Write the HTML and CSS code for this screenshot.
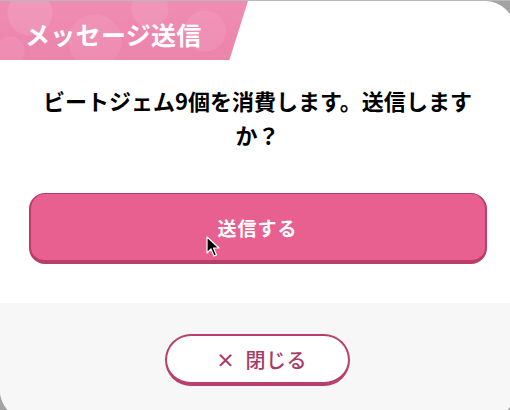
FILE: index.html
```html
<!DOCTYPE html>
<html lang="ja">
<head>
<meta charset="utf-8">
<title>メッセージ送信</title>
<link rel="stylesheet" href="styles.css">
</head>
<body>
<div class="dialog">
    <div class="head">
        <h1 class="title">メッセージ送信</h1>
    </div>
    <div class="main">
        <p class="msg">ビートジェム9個を消費します。送信しますか？</p>
        <button class="send">送信する</button>
    </div>
    <div class="foot">
        <button class="close"><span class="x">×</span>閉じる</button>
    </div>
</div>
<svg class="cursor" width="14" height="22" viewBox="0 0 14 22">
    <path d="M1 1 L1 17 L5 13 L8 20 L10.5 19 L7.5 12 L13 12 Z" fill="#000" stroke="#fff" stroke-width="1.2" stroke-linejoin="round"/>
</svg>
</body>
</html>
```
FILE: styles.css
```css
*{ margin:0; padding:0; box-sizing:border-box;}
html,body{ width:510px; height:410px; overflow:hidden;}
body{ background:#a3a3a3; border-top:1px solid #b8b8b8; font-family:"Noto Sans CJK JP","Noto Sans",sans-serif; position:relative;}
.dialog{ width:515px; height:419px; background:#fff; border-radius:0 30px 30px 30px; overflow:hidden; display:flex; flex-direction:column;}
.head{ height:59px;}
.title{ width:248px; height:59px; padding:6px 0 0 25px; display:flex; align-items:center; color:#fff; font-size:25px; font-weight:700; letter-spacing:0.3px;
    clip-path:polygon(0 0,100% 0,92.5% 100%,0 100%);
    background:
        radial-gradient(circle at 30px 12px,rgba(255,255,255,.1) 0 22px,transparent 23px),
        radial-gradient(circle at 95px 40px,rgba(255,255,255,.07) 0 26px,transparent 27px),
        radial-gradient(circle at 150px 8px,rgba(255,255,255,.09) 0 18px,transparent 19px),
        radial-gradient(circle at 205px 30px,rgba(255,255,255,.08) 0 20px,transparent 21px),
        radial-gradient(circle at 10px 50px,rgba(255,255,255,.07) 0 14px,transparent 15px),
        linear-gradient(#f08cb2,#ec84ab);}
.main{ height:243px; padding-top:23px; display:flex; flex-direction:column; align-items:center;}
.msg{ width:470px; font-size:22px; font-weight:700; line-height:34px; text-align:center; color:#000;}
.send{ margin-top:42px; width:458px; height:71px; border-radius:16px; background:#e8608f; border:1px solid #b83d69; border-bottom-width:4px; border-left-width:2px; border-right-width:2px;
    color:#fff; font-family:inherit; font-size:19px; font-weight:700; letter-spacing:1px; padding-top:1px;}
.foot{ flex:1; background:#f7f7f7; padding-top:31px; display:flex; justify-content:center; align-items:flex-start;}
.close{ width:185px; height:52px; border-radius:26px; background:#fff; border:2px solid #b8406c; border-bottom-width:4px;
    color:#a83a66; font-family:inherit; font-size:20px; font-weight:500; display:flex; align-items:center; justify-content:center; letter-spacing:0.5px; padding-left:8px;}
.x{ font-size:19px; font-weight:700; margin-right:10px; line-height:1;}
.cursor{ position:absolute; left:206px; top:235px;}
```
